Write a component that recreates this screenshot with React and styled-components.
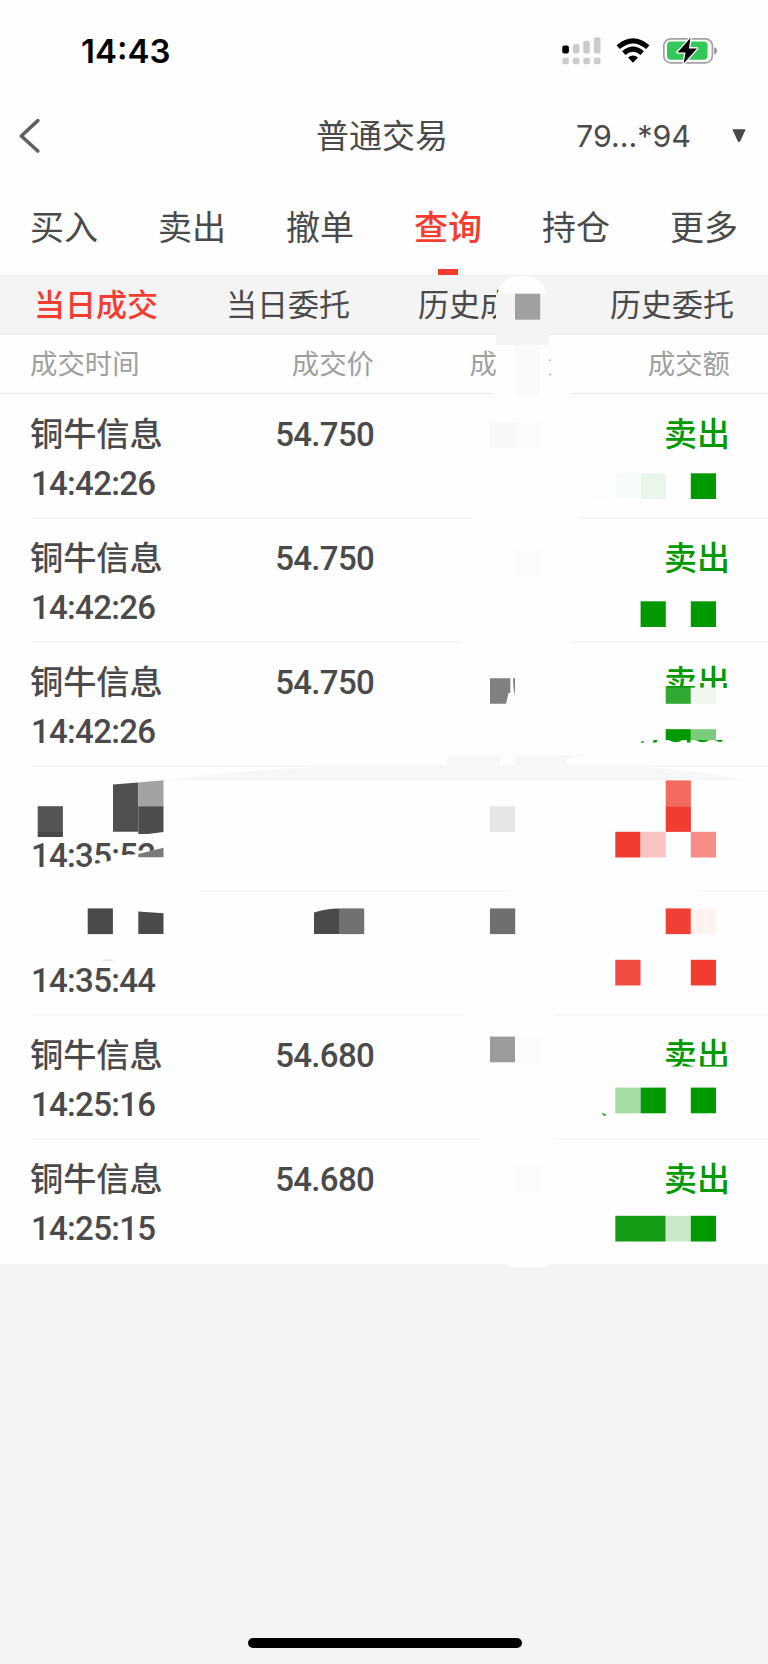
import React from 'react';
import styled, { createGlobalStyle } from 'styled-components';

const RED = '#f43d30';
const GREEN = '#009900';

const tabs = ['买入', '卖出', '撤单', '查询', '持仓', '更多'];
const subTabs = ['当日成交', '当日委托', '历史成交', '历史委托'];

const trades = [
  { name: '铜牛信息', time: '14:42:26', price: '54.750', side: '卖出' },
  { name: '铜牛信息', time: '14:42:26', price: '54.750', side: '卖出' },
  { name: '铜牛信息', time: '14:42:26', price: '54.750', side: '卖出' },
  { name: '', time: '14:35:52', price: '', side: '' },
  { name: '', time: '14:35:44', price: '', side: '' },
  { name: '铜牛信息', time: '14:25:16', price: '54.680', side: '卖出' },
  { name: '铜牛信息', time: '14:25:15', price: '54.680', side: '卖出' },
];

// [x, y, color, width, height]
const mosaic = [
  [515, 293.7, '#a0a0a0', 25.2, 26],
  [515, 345, '#fafafa', 25.2, 51.5],
  [490, 422, '#f8f8f8'],
  [515, 422, '#fbfbfb'],
  [590.3, 473.3, '#fcfefc'],
  [615.3, 473.3, '#f8fcf8'],
  [640.6, 473.3, '#eaf6ea'],
  [690.8, 473.3, '#009900'],
  [515, 550.3, '#fbfbfb'],
  [640.6, 601.3, '#009900'],
  [690.8, 601.3, '#009900'],
  [665.7, 687.6, '#32a932', 25.2, 16.2],
  [690.8, 687.6, '#f0f7f0', 25.2, 16.2],
  [665.7, 729.2, '#009900', 25.2, 11],
  [690.8, 729.2, '#7bcb7b', 25.2, 11],
  [37.7, 806.2, '#555555', 25.2, 26],
  [37.7, 832, '#484848', 25.2, 5],
  [339, 806.2, '#fdfdfd'],
  [490, 806.2, '#e6e6e6'],
  [665.7, 780.4, '#f36a61'],
  [665.7, 806.2, '#f03c31'],
  [615.3, 831.8, '#f03c31'],
  [640.6, 831.8, '#f9c4c1'],
  [690.8, 831.8, '#f68d87'],
  [87.7, 908.4, '#4a4a4a'],
  [339, 908.4, '#717171'],
  [490, 908.4, '#6f6f6f'],
  [665.7, 908.4, '#f04035'],
  [690.8, 908.4, '#fff3f2'],
  [615.3, 959.8, '#f24c42'],
  [690.8, 959.8, '#f03c31'],
  [490, 1036.6, '#9b9b9b'],
  [515, 1036.6, '#fbfbfb'],
  [615.3, 1087.6, '#a4dca4'],
  [640.6, 1087.6, '#009900'],
  [690.8, 1087.6, '#009900'],
  [515, 1164.8, '#fbfbfb'],
  [615.3, 1215.8, '#149c14', 50.4],
  [665.7, 1215.8, '#cbe8cb'],
  [690.8, 1215.8, '#009900'],
];

// areas wiped out by hand
const wiped = [
  [496, 345, 53, 40],
  [494, 385, 77, 12],
  [474, 514, 106, 8],
  [461, 638, 110, 8],
  [660, 688, 72, 12],
  [0, 886, 200, 8],
  [509, 886, 190, 8],
  [465, 1011, 90, 8],
  [480, 1135, 75, 8],
  [660, 1066.6, 75, 8],
];

function SignalIcon() {
  return (
    <svg width="40" height="28" viewBox="0 0 40 28">
      <rect x="0.3" y="8.5" width="6.6" height="8" rx="2" fill="#000" />
      <g fill="#cbcbcb">
        <rect x="10.8" y="7" width="6.6" height="9.5" rx="2" />
        <rect x="21.3" y="3.8" width="6.6" height="12.7" rx="2" />
        <rect x="31.9" y="0.2" width="6.6" height="16.3" rx="2" />
        <rect x="0.3" y="20.8" width="6.6" height="6.4" rx="2" />
        <rect x="10.8" y="20.8" width="6.6" height="6.4" rx="2" />
        <rect x="21.3" y="20.8" width="6.6" height="6.4" rx="2" />
        <rect x="31.9" y="20.8" width="6.6" height="6.4" rx="2" />
      </g>
    </svg>
  );
}

function WifiIcon() {
  return (
    <svg width="34" height="26" viewBox="0 0 34 26">
      <g fill="none" stroke="#000" strokeWidth="5">
        <path d="M2.2 9.2 Q17 -3.5 31.8 9.2" />
        <path d="M7.8 15.1 Q17 7.2 26.2 15.1" />
      </g>
      <path d="M12 19.5 Q17 15.5 22 19.5 L17 24.8 Z" fill="#000" />
    </svg>
  );
}

function BatteryIcon() {
  return (
    <svg width="54" height="28" viewBox="0 0 54 28">
      <rect x="0.8" y="1.8" width="48.6" height="24" rx="7" fill="none" stroke="#a3a3a3" strokeWidth="1.7" />
      <path d="M51.2 10 Q54 11.2 54 13.8 Q54 16.4 51.2 17.6 Z" fill="#8d8d8d" />
      <rect x="4" y="4.6" width="40.5" height="18.2" rx="4" fill="#34c759" />
      <path
        d="M27.5 1 L14.5 15.4 H22.6 L20.6 26.4 L34 11.4 H25.9 Z"
        fill="#000"
        stroke="#fff"
        strokeWidth="2.6"
        strokeLinejoin="round"
        paintOrder="stroke"
      />
    </svg>
  );
}

function Redaction() {
  return (
    <Overlay width="768" height="1664" viewBox="0 0 768 1664">
      <path d="M497 294 Q503 275.7 522 275.7 Q541 275.7 547 294 Z" fill="#fefefe" />
      <rect x="496" y="294" width="53" height="51" fill="#f4f4f4" />
      {wiped.map(([x, y, w, h]) => (
        <rect key={`${x}-${y}`} x={x} y={y} width={w} height={h} fill="#fefefe" />
      ))}
      <g fill="#f7f7f7">
        <path d="M163 780.5 Q230 771 330 766.5 H634 Q690 770 725 776 Q736 778 741 780.5 Z" />
        <path d="M446 766 L449 755 H502 L499 766 Z" />
        <path d="M515 766 V755 H588 Q567 757 567 760 V766 Z" />
      </g>
      {mosaic.map(([x, y, color, w = 25.2, h = 25.7]) => (
        <rect key={`${x}-${y}`} x={x} y={y} width={w} height={h} fill={color} />
      ))}

      <path d="M490 678.3 H510.3 V693 H508.5 L506 703.8 H490 Z" fill="#808080" />
      <path d="M513 678.3 H515 V696 Q513 688 513 678.3 Z" fill="#808080" />

      <g fill={GREEN}>
        <path d="M641 741.4 h3 v1.3 h-3 z" />
        <path d="M654 740 h3.5 l-1 2.6 h-4 z" />
        <path d="M669 740 h13 q-6 4.5 -13 0 z" />
        <path d="M687 740 h3.5 v2.6 h-3.5 z" />
        <path d="M696 740 h13 q-6 4.5 -13 0 z" />
        <path d="M715 740 h8 q-2 4 -8 0 z" />
        <path d="M602 1113 l4 1.4 v1 h-3 z" />
      </g>

      <path d="M78 872 L88 866 L94 860 L95 864 L109 861 L122 855.5 L138 854 L163.5 848 V872 Z" fill="#fefefe" />
      <path d="M95 861.5 h3 v1.6 h-3 z" fill="#505050" />
      <path d="M138.3 854 L163.5 847.8 V857.2 H138.3 Z" fill="#7a7a7a" />
      <path d="M113 784.6 L138.3 782.4 V831.8 H113 Z" fill="#505050" />
      <path d="M138.3 782.4 L163.5 780.2 V806.2 H138.3 Z" fill="#a2a2a2" />
      <path d="M138.3 806.2 H163.5 V832 L148 834 H138.3 Z" fill="#4d4d4d" />

      <path d="M138.3 911.6 L163.5 913.3 V934.1 H138.3 Z" fill="#4a4a4a" />
      <path d="M314 912.6 Q324 908.6 339 908.4 V934.1 H314 Z" fill="#4a4a4a" />
      <path d="M101 960.4 Q108 959 113 959.8 V960.8 Z" fill="#d8d8d8" />
      <path d="M549.3 359.5 h1.4 v1.6 h-1.4 z M549.3 374 h1.4 v1.6 h-1.4 z" fill="#a0a0a0" />
      <path d="M507 1262 H549 Q547 1267 544 1267 H512 Q509 1267 507 1262 Z" fill="#fefefe" />
    </Overlay>
  );
}

function App() {
  return (
    <Screen>
      <GlobalStyle />
      <StatusBar>
        <Clock>14:43</Clock>
        <StatusIcons>
          <SignalIcon />
          <WifiIcon />
          <BatteryIcon />
        </StatusIcons>
      </StatusBar>
      <NavBar>
        <BackButton>
          <svg width="22" height="36" viewBox="0 0 22 36">
            <path
              d="M19.8 2.6 L3.3 18 L19.8 33"
              fill="none"
              stroke="#606060"
              strokeWidth="3.6"
              strokeLinecap="round"
              strokeLinejoin="round"
            />
          </svg>
        </BackButton>
        <Title>普通交易</Title>
        <Account>
          <span>79...*94</span>
          <svg width="14" height="14" viewBox="0 0 14 14">
            <path d="M1 0.8 H13 L7.6 12.6 H6.4 Z" fill="#4a4a4a" stroke="#4a4a4a" strokeLinejoin="round" />
          </svg>
        </Account>
      </NavBar>
      <Tabs>
        {tabs.map((tab) => (
          <Tab key={tab} $active={tab === '查询'}>
            {tab}
          </Tab>
        ))}
      </Tabs>
      <SubTabs>
        {subTabs.map((tab, idx) => (
          <SubTab key={tab} $active={idx === 0}>
            {tab}
          </SubTab>
        ))}
      </SubTabs>
      <TableHead>
        <HeadCell>成交时间</HeadCell>
        <HeadCell>成交价</HeadCell>
        <HeadCell>成</HeadCell>
        <HeadCell>成交额</HeadCell>
      </TableHead>
      <TradeList>
        {trades.map(({ name, time, price, side }, idx) => (
          <TradeRow key={`trade-${idx}`}>
            <Stock>
              <StockName>{name}</StockName>
              <Digits>{time}</Digits>
            </Stock>
            <Digits $price>{price}</Digits>
            <Side>{side}</Side>
          </TradeRow>
        ))}
      </TradeList>
      <Footer>
        <HomeIndicator />
      </Footer>
      <Redaction />
    </Screen>
  );
}

export default App;

const GlobalStyle = createGlobalStyle`
  * {
    box-sizing: border-box;
  }

  body {
    margin: 0;
    background: #f4f4f4;
  }

  svg {
    display: block;
  }
`;

const Screen = styled.div`
  position: relative;
  display: flex;
  flex-direction: column;
  width: 768px;
  height: 1664px;
  overflow: hidden;
  background: #fefefe;
  color: #4a4a4a;
  font-family: 'Inter', 'Noto Sans CJK SC', sans-serif;
  white-space: nowrap;
`;

const StatusBar = styled.div`
  display: flex;
  justify-content: space-between;
  align-items: center;
  height: 102px;
  padding: 0 51px 0 81px;
`;

const Clock = styled.div`
  color: #000;
  font-size: 33px;
  font-weight: 600;
`;

const StatusIcons = styled.div`
  display: flex;
  align-items: center;
  gap: 13.5px;
`;

const NavBar = styled.div`
  display: grid;
  grid-template-columns: 1fr auto 1fr;
  align-items: center;
  height: 68px;
  padding: 0 22px 0 18px;
`;

const BackButton = styled.div`
  width: 22px;
`;

const Title = styled.div`
  padding-bottom: 4px;
  font-size: 33px;
`;

const Account = styled.div`
  display: flex;
  justify-content: flex-end;
  align-items: center;
  gap: 41px;
  font-size: 30.4px;
`;

const Tabs = styled.div`
  display: grid;
  grid-template-columns: repeat(6, 1fr);
  height: 105px;
`;

const Tab = styled.div`
  display: flex;
  flex-direction: column;
  align-items: center;
  padding-top: 33px;
  font-size: 34px;
  line-height: 50px;
  font-weight: ${(props) => (props.$active ? 500 : 400)};
  color: ${(props) => (props.$active ? RED : '#4a4a4a')};

  &::after {
    content: '';
    width: 20px;
    height: 6px;
    margin-top: 16px;
    background: ${(props) => (props.$active ? RED : 'transparent')};
  }
`;

const SubTabs = styled.div`
  display: grid;
  grid-template-columns: repeat(4, 1fr);
  height: 60px;
  background: #f4f4f4;
  border-top: 1px solid #efefef;
  border-bottom: 2px solid #efefef;
`;

const SubTab = styled.div`
  font-size: 31px;
  line-height: 58px;
  text-align: center;
  font-weight: ${(props) => (props.$active ? 500 : 400)};
  color: ${(props) => (props.$active ? RED : '#4a4a4a')};
`;

const TableHead = styled.div`
  display: grid;
  grid-template-columns: 172px 172px 123px 1fr;
  height: 59px;
  padding: 0 38px 0 30px;
  border-bottom: 1px solid #e9e9e9;
`;

const HeadCell = styled.div`
  color: #9f9f9f;
  font-size: 27.4px;
  line-height: 59px;
  text-align: right;

  &:first-child {
    text-align: left;
  }
`;

const TradeList = styled.div`
  padding: 1px 0 0 31px;
`;

const TradeRow = styled.div`
  display: grid;
  grid-template-columns: 171px 172px 1fr;
  height: 124.15px;
  padding: 15px 38px 0 0;
  border-bottom: 2px solid #f7f7f7;

  &:last-child {
    border-bottom: 0;
  }
`;

const Stock = styled.div`
  display: flex;
  flex-direction: column;
`;

const StockName = styled.div`
  height: 49px;
  margin-left: -1px;
  font-size: 33.2px;
  line-height: 49px;
  font-weight: 500;
`;

const Digits = styled.div`
  font-family: 'Roboto', sans-serif;
  font-size: 33px;
  line-height: 49px;
  font-weight: 500;
  letter-spacing: -0.7px;
  text-align: ${(props) => (props.$price ? 'right' : 'left')};
`;

const Side = styled.div`
  color: ${GREEN};
  font-size: 33px;
  line-height: 49px;
  font-weight: 500;
  text-align: right;
`;

const Footer = styled.div`
  flex: 1;
  display: flex;
  justify-content: center;
  align-items: flex-end;
  padding: 0 0 16px 2px;
  background: #f4f4f4;
`;

const HomeIndicator = styled.div`
  width: 274px;
  height: 10px;
  border-radius: 5px;
  background: #000;
`;

const Overlay = styled.svg`
  position: absolute;
  top: 0;
  left: 0;
  pointer-events: none;
`;
